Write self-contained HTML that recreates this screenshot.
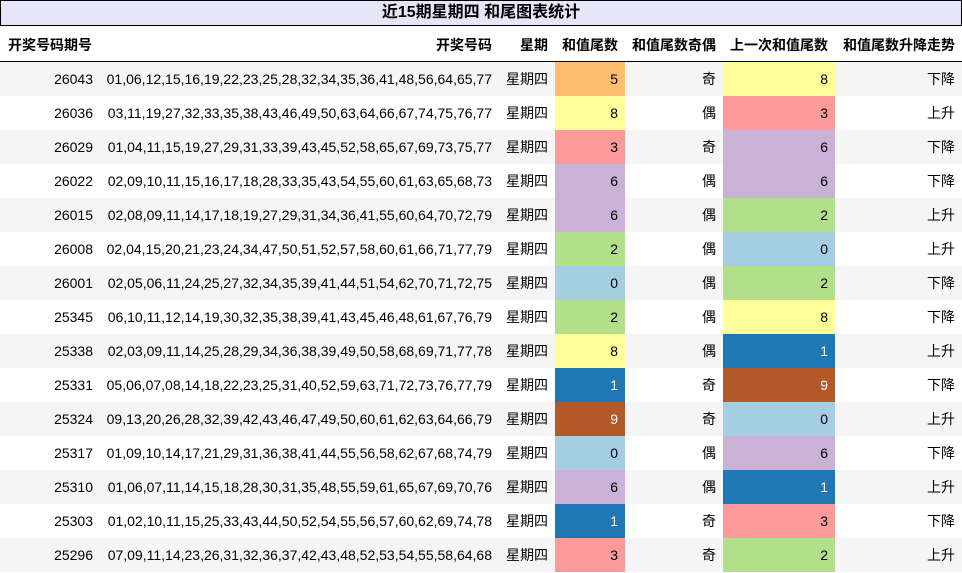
<!DOCTYPE html>
<html><head><meta charset="utf-8"><style>
*{margin:0;padding:0;box-sizing:border-box}
body{width:962px;height:573px;background:#fff;font-family:"Liberation Sans","Noto Sans CJK SC",sans-serif;font-size:14px;color:#000;position:relative;overflow:hidden}
.title{position:absolute;left:0;top:0;width:962px;height:26px;background:#e6e6f8;border:1px solid #000;text-align:center;font-weight:bold;font-size:16px;line-height:24px}
.hdr{position:absolute;top:26px;height:36px;width:962px;border-bottom:1px solid #000}
.r{position:absolute;height:34px;width:962px}
.c{position:absolute;top:0;height:100%;line-height:34px;text-align:right;padding-right:7px;white-space:nowrap}
.hdr .c{font-weight:bold;line-height:38px}
</style></head><body>
<div class="title">近15期星期四 和尾图表统计</div>
<div class="hdr">
<div class="c" style="left:0;width:100px;text-align:left;padding-left:8px">开奖号码期号</div>
<div class="c" style="left:100px;width:399px">开奖号码</div>
<div class="c" style="left:499px;width:56px">星期</div>
<div class="c" style="left:555px;width:70px">和值尾数</div>
<div class="c" style="left:625px;width:98px">和值尾数奇偶</div>
<div class="c" style="left:723px;width:112px">上一次和值尾数</div>
<div class="c" style="left:835px;width:127px">和值尾数升降走势</div>
</div>
<div id="rows"></div>
<script>
var d=[["26043","01,06,12,15,16,19,22,23,25,28,32,34,35,36,41,48,56,64,65,77",5,"奇",8,"下降"],
["26036","03,11,19,27,32,33,35,38,43,46,49,50,63,64,66,67,74,75,76,77",8,"偶",3,"上升"],
["26029","01,04,11,15,19,27,29,31,33,39,43,45,52,58,65,67,69,73,75,77",3,"奇",6,"下降"],
["26022","02,09,10,11,15,16,17,18,28,33,35,43,54,55,60,61,63,65,68,73",6,"偶",6,"下降"],
["26015","02,08,09,11,14,17,18,19,27,29,31,34,36,41,55,60,64,70,72,79",6,"偶",2,"上升"],
["26008","02,04,15,20,21,23,24,34,47,50,51,52,57,58,60,61,66,71,77,79",2,"偶",0,"上升"],
["26001","02,05,06,11,24,25,27,32,34,35,39,41,44,51,54,62,70,71,72,75",0,"偶",2,"下降"],
["25345","06,10,11,12,14,19,30,32,35,38,39,41,43,45,46,48,61,67,76,79",2,"偶",8,"下降"],
["25338","02,03,09,11,14,25,28,29,34,36,38,39,49,50,58,68,69,71,77,78",8,"偶",1,"上升"],
["25331","05,06,07,08,14,18,22,23,25,31,40,52,59,63,71,72,73,76,77,79",1,"奇",9,"下降"],
["25324","09,13,20,26,28,32,39,42,43,46,47,49,50,60,61,62,63,64,66,79",9,"奇",0,"上升"],
["25317","01,09,10,14,17,21,29,31,36,38,41,44,55,56,58,62,67,68,74,79",0,"偶",6,"下降"],
["25310","01,06,07,11,14,15,18,28,30,31,35,48,55,59,61,65,67,69,70,76",6,"偶",1,"上升"],
["25303","01,02,10,11,15,25,33,43,44,50,52,54,55,56,57,60,62,69,74,78",1,"奇",3,"下降"],
["25296","07,09,11,14,23,26,31,32,36,37,42,43,48,52,53,54,55,58,64,68",3,"奇",2,"上升"]];
var col={0:"#a6cee3",1:"#1f78b4",2:"#b2df8a",3:"#fb9a99",5:"#fdbf6f",6:"#cab2d6",8:"#ffff99",9:"#b15928"};
function st(n){return "background:"+col[n]+";color:"+((n==1||n==9)?"#fff":"#000")}
var h="";
d.forEach(function(r,i){
h+='<div class="r" style="top:'+(62+i*34)+'px;background:'+(i%2?'#fff':'#f5f5f5')+'">'+
'<div class="c" style="left:0;width:100px">'+r[0]+'</div>'+
'<div class="c" style="left:100px;width:399px">'+r[1]+'</div>'+
'<div class="c" style="left:499px;width:56px">星期四</div>'+
'<div class="c" style="left:555px;width:70px;'+st(r[2])+'">'+r[2]+'</div>'+
'<div class="c" style="left:625px;width:98px">'+r[3]+'</div>'+
'<div class="c" style="left:723px;width:112px;'+st(r[4])+'">'+r[4]+'</div>'+
'<div class="c" style="left:835px;width:127px">'+r[5]+'</div></div>';});
document.getElementById("rows").innerHTML=h;
</script>
</body></html>
